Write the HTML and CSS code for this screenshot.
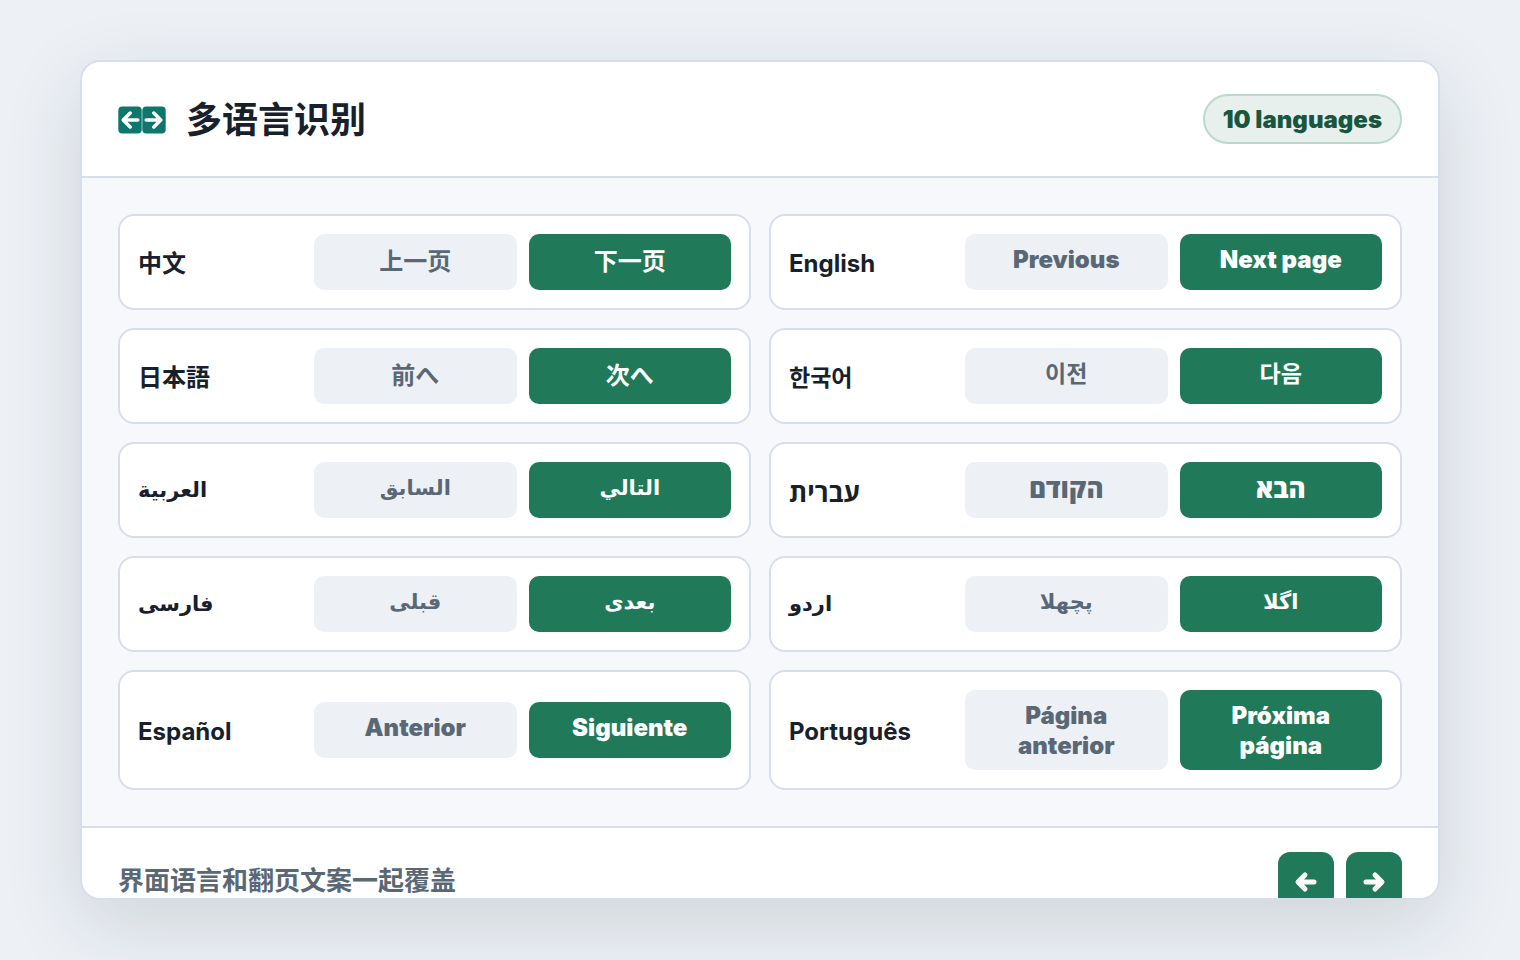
FILE: index.html
```html
<!DOCTYPE html>
<html lang="zh-CN">
<head>
    <meta charset="UTF-8">
    <meta name="viewport" content="width=device-width, initial-scale=1.0">
    <title>多语言识别</title>
    <link rel="stylesheet" href="styles.css">
</head>
<body>
    <main class="panel">
        <header class="panel-header">
            <svg class="logo" viewBox="0 0 48 30" aria-hidden="true">
                <rect x="0.3" y="2.6" width="23.4" height="26.8" rx="4"/>
                <rect x="24.3" y="2.6" width="23.4" height="26.8" rx="4"/>
                <path d="M19.8 16H5.5M12.2 9L5.2 16l7 7M28.2 16h14.3M35.8 9l7 7-7 7"/>
            </svg>
            <h1>多语言识别</h1>
            <span class="badge">10 languages</span>
        </header>

        <ul class="language-grid">
            <li class="language" lang="zh-CN">
                <span class="name">中文</span>
                <button class="btn">上一页</button>
                <button class="btn btn-next">下一页</button>
            </li>
            <li class="language" lang="en">
                <span class="name">English</span>
                <button class="btn">Previous</button>
                <button class="btn btn-next">Next page</button>
            </li>
            <li class="language" lang="ja">
                <span class="name">日本語</span>
                <button class="btn">前へ</button>
                <button class="btn btn-next">次へ</button>
            </li>
            <li class="language" lang="ko">
                <span class="name">한국어</span>
                <button class="btn">이전</button>
                <button class="btn btn-next">다음</button>
            </li>
            <li class="language" lang="ar">
                <span class="name">العربية</span>
                <button class="btn">السابق</button>
                <button class="btn btn-next">التالي</button>
            </li>
            <li class="language" lang="he">
                <span class="name">עברית</span>
                <button class="btn">הקודם</button>
                <button class="btn btn-next">הבא</button>
            </li>
            <li class="language" lang="fa">
                <span class="name">فارسی</span>
                <button class="btn">قبلی</button>
                <button class="btn btn-next">بعدی</button>
            </li>
            <li class="language" lang="ur">
                <span class="name">اردو</span>
                <button class="btn">پچھلا</button>
                <button class="btn btn-next">اگلا</button>
            </li>
            <li class="language" lang="es">
                <span class="name">Español</span>
                <button class="btn">Anterior</button>
                <button class="btn btn-next">Siguiente</button>
            </li>
            <li class="language" lang="pt">
                <span class="name">Português</span>
                <button class="btn">Página anterior</button>
                <button class="btn btn-next">Próxima página</button>
            </li>
        </ul>

        <footer class="panel-footer">
            <p>界面语言和翻页文案一起覆盖</p>
            <div class="pager">
                <button class="arrow" aria-label="上一页">
                    <svg viewBox="0 0 24 24" aria-hidden="true"><path d="M20 12H4.5M11 5L4 12l7 7"/></svg>
                </button>
                <button class="arrow" aria-label="下一页">
                    <svg viewBox="0 0 24 24" aria-hidden="true"><path d="M4 12H19.5M13 5l7 7-7 7"/></svg>
                </button>
            </div>
        </footer>
    </main>
</body>
</html>
```
FILE: styles.css
```css
:root {
    --text: #17202b;
    --muted: #5a6876;
    --line: #d8dee9;
    --page: #edf1f6;
    --soft: #f6f8fc;
    --green: #207a5a;
}

* {
    box-sizing: border-box;
}

body {
    margin: 0;
    height: 100vh;
    padding: 60px 80px;
    background: var(--page);
    color: var(--text);
    font-family: Inter, "Noto Sans CJK SC", sans-serif;
    font-size: 24px;
    line-height: 30px;
}

button {
    border: none;
    font: inherit;
    cursor: pointer;
}

.panel {
    height: 100%;
    overflow: hidden;
    background: #fff;
    border: 2px solid var(--line);
    border-radius: 20px;
    box-shadow: 0 24px 80px rgba(24, 32, 40, 0.14);
}

/* Header */
.panel-header {
    display: flex;
    align-items: center;
    gap: 20px;
    padding: 32px 36px;
    border-bottom: 2px solid var(--line);
}

.logo {
    width: 48px;
    height: 30px;
    fill: #0f766e;
}

.logo path {
    fill: none;
    stroke: #fff;
    stroke-width: 3.5;
    stroke-linecap: round;
    stroke-linejoin: round;
}

h1 {
    margin: 0;
    padding-top: 2px;
    font-size: 36px;
    line-height: 44px;
    font-weight: 700;
}

.badge {
    margin-left: auto;
    padding: 9px 18px 7px;
    border: 2px solid #bbd8cc;
    border-radius: 25px;
    background: #e8f0ed;
    color: #17573f;
    font-weight: 900;
}

/* Language cards */
.language-grid {
    display: grid;
    grid-template-columns: 1fr 1fr;
    gap: 18px;
    margin: 0;
    padding: 36px;
    list-style: none;
    background: var(--soft);
}

.language {
    display: grid;
    grid-template-columns: 164px 1fr 1fr;
    align-items: center;
    gap: 12px;
    padding: 18px;
    background: #fff;
    border: 2px solid var(--line);
    border-radius: 16px;
}

.name {
    padding-top: 3px;
    font-weight: 700;
}

.btn {
    display: flex;
    justify-content: center;
    align-items: flex-start;
    min-height: 56px;
    padding: 11px 16px 9px;
    border-radius: 10px;
    background: var(--page);
    color: var(--muted);
    font-weight: 900;
    text-align: center;
}

.btn-next {
    background: var(--green);
    color: #fff;
}

/* Scripts whose fonts stop at bold */
.language:lang(zh) .btn,
.language:lang(ja) .btn,
.language:lang(ko) .btn {
    font-weight: 700;
}

.language:lang(he) .btn {
    font-weight: 800;
}

.language:lang(zh),
.language:lang(ja) {
    line-height: 34px;
}

.language:lang(ja) {
    font-family: Inter, "Noto Sans CJK JP", sans-serif;
}

.language:lang(ko) {
    font-family: Inter, "Noto Sans CJK KR", sans-serif;
    font-size: 23px;
}

.language:lang(he) {
    font-family: "Open Sans", sans-serif;
    font-size: 26px;
}

.language:lang(ar),
.language:lang(fa),
.language:lang(ur) {
    font-family: "DejaVu Sans", sans-serif;
    font-size: 21px;
}

.language:lang(ar) .name,
.language:lang(fa) .name,
.language:lang(ur) .name {
    padding-top: 0;
}

/* Footer */
.panel-footer {
    display: flex;
    justify-content: space-between;
    align-items: center;
    padding: 24px 36px;
    border-top: 2px solid var(--line);
}

.panel-footer p {
    margin: 0;
    padding-top: 2px;
    color: var(--muted);
    font-size: 26px;
    font-weight: 600;
}

.pager {
    display: flex;
    gap: 12px;
}

.arrow {
    display: flex;
    justify-content: center;
    align-items: center;
    width: 56px;
    height: 56px;
    padding: 4px 0 0;
    border-radius: 12px;
    background: var(--green);
}

.arrow svg {
    width: 24px;
    height: 24px;
    fill: none;
    stroke: #fff;
    stroke-width: 5;
    stroke-linecap: round;
    stroke-linejoin: round;
}
```
